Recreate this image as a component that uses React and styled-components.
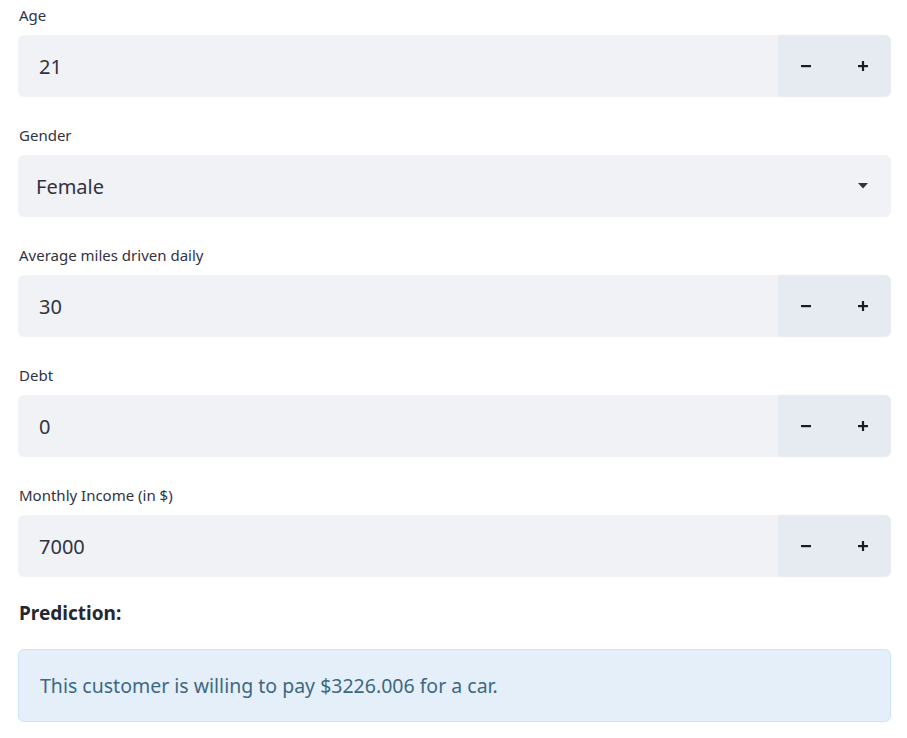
import React from "react";
import styled, { createGlobalStyle } from "styled-components";

const Global = createGlobalStyle`
  html, body { margin: 0; padding: 0; background: #ffffff; }
  body { font-family: "Noto Sans", "Open Sans", "Liberation Sans", sans-serif; color: #31333f; }
`;

const Page = styled.div`
  display: flex;
  flex-direction: column;
  padding: 5px 16px 0 18px;
  gap: 28px;
`;

const Field = styled.div`
  display: flex;
  flex-direction: column;
  gap: 10px;
`;

const Label = styled.label`
  font-size: 15px;
  line-height: 20px;
  height: 20px;
  padding-left: 1px;
  color: #31333f;
`;

const InputRow = styled.div`
  display: flex;
  height: 62px;
  border-radius: 6px;
  overflow: hidden;
  background: #f0f2f6;
`;

const Value = styled.div`
  flex: 1;
  display: flex;
  align-items: center;
  padding-left: ${(p) => p.$pad}px;
  font-size: 20px;
  color: #31333f;
`;

const Stepper = styled.div`
  display: flex;
  width: 113px;
  background: #e6eaf1;
`;

const StepButton = styled.button`
  flex: 1;
  border: none;
  background: transparent;
  display: flex;
  align-items: center;
  justify-content: center;
  padding: 0;
  cursor: pointer;
`;

const Arrow = styled.div`
  width: 56px;
  display: flex;
  align-items: center;
  justify-content: center;
  padding-left: 2px;
`;

const Heading = styled.div`
  font-size: 19px;
  font-weight: 700;
  line-height: 24px;
  padding-left: 1px;
  margin-top: -4px;
  color: #262730;
`;

const Info = styled.div`
  margin-top: -4px;
  height: 73px;
  box-sizing: border-box;
  border: 1px solid #cfe3f5;
  border-radius: 6px;
  background: #e4eff9;
  display: flex;
  align-items: center;
  padding-left: 21px;
  font-size: 19.5px;
  color: #3d6882;
`;

const Minus = () => (
  <svg width="12" height="12" viewBox="0 0 12 12">
    <rect x="1" y="5" width="10" height="2.2" fill="#1b1b22" />
  </svg>
);

const Plus = () => (
  <svg width="12" height="12" viewBox="0 0 12 12">
    <rect x="1" y="5" width="10" height="2.2" fill="#1b1b22" />
    <rect x="4.9" y="1" width="2.2" height="10" fill="#1b1b22" />
  </svg>
);

const Caret = () => (
  <svg width="10" height="6" viewBox="0 0 10 6">
    <path d="M0 0 L10 0 L5 5.5 Z" fill="#31333f" />
  </svg>
);

const NumberField = ({ label, value }) => (
  <Field>
    <Label>{label}</Label>
    <InputRow>
      <Value $pad={21}>{value}</Value>
      <Stepper>
        <StepButton aria-label="decrement"><Minus /></StepButton>
        <StepButton aria-label="increment"><Plus /></StepButton>
      </Stepper>
    </InputRow>
  </Field>
);

export default function App() {
  return (
    <>
      <Global />
      <Page>
        <NumberField label="Age" value="21" />
        <Field>
          <Label>Gender</Label>
          <InputRow>
            <Value $pad={18}>Female</Value>
            <Arrow><Caret /></Arrow>
          </InputRow>
        </Field>
        <NumberField label="Average miles driven daily" value="30" />
        <NumberField label="Debt" value="0" />
        <NumberField label="Monthly Income (in $)" value="7000" />
        <Heading>Prediction:</Heading>
        <Info>This customer is willing to pay $3226.006 for a car.</Info>
      </Page>
    </>
  );
}
